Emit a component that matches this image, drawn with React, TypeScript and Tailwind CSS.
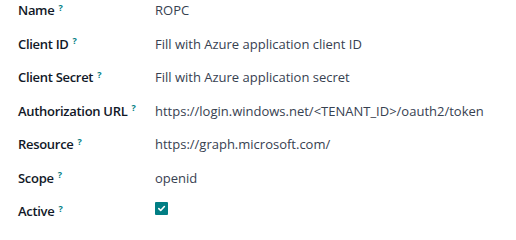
const fields = [
  { label: "Name", value: "ROPC" },
  { label: "Client ID", value: "Fill with Azure application client ID" },
  { label: "Client Secret", value: "Fill with Azure application secret" },
  {
    label: "Authorization URL",
    value: "https://login.windows.net/<TENANT_ID>/oauth2/token",
  },
  { label: "Resource", value: "https://graph.microsoft.com/" },
  { label: "Scope", value: "openid" },
];

const Label = ({ text }: { text: string }) => (
  <div className="w-[137px] shrink-0 font-semibold tracking-[-0.3px] text-[#111827]">
    {text}
    <sup className="ml-[4px] text-[9px] font-bold text-[#017e84]">?</sup>
  </div>
);

export default function App() {
  return (
    <div
      className="w-[516px] h-[240px] bg-white pl-[18px] text-[13px] leading-[20px]"
      style={{ fontFamily: '"Open Sans", "Noto Sans", sans-serif' }}
    >
      {fields.map((f) => (
        <div key={f.label} className="flex h-[33.5px] items-start">
          <Label text={f.label} />
          <div className="text-[#374151]">{f.value}</div>
        </div>
      ))}
      <div className="flex h-[33.5px] items-start">
        <Label text="Active" />
        <div className="pt-[1px]">
          <span className="flex h-[13px] w-[13px] items-center justify-center rounded-[1px] bg-[#017e84]">
            <svg width="9" height="9" viewBox="0 0 10 10" fill="none">
              <path
                d="M2 5.2 L4.1 7.2 L8.2 2.8"
                stroke="white"
                strokeWidth="1.8"
                strokeLinecap="round"
                strokeLinejoin="round"
              />
            </svg>
          </span>
        </div>
      </div>
    </div>
  );
}
